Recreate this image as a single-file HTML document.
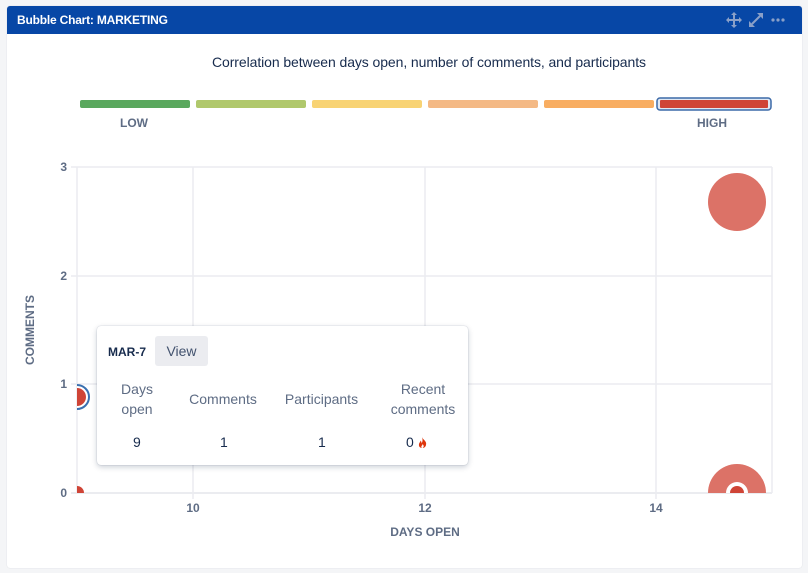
<!DOCTYPE html>
<html><head><meta charset="utf-8"><style>
body{margin:0;background:#f4f5f7;font-family:"Liberation Sans",Arial,sans-serif;width:808px;height:573px;overflow:hidden;position:relative}
.card{position:absolute;left:7px;top:6px;width:795px;height:562px;background:#fff;border-radius:3px;box-shadow:0 0 1px #c8ccd4}
.hdr{height:28px;background:#0747a6;color:#fff;font-weight:bold;font-size:12px;line-height:28px;padding-left:10px;border-radius:3px 3px 0 0;letter-spacing:-0.2px}
.tip{position:absolute;left:97px;top:326px;width:371px;height:139px;background:#fff;border-radius:4px;box-shadow:0 2px 6px rgba(9,30,66,.22),0 0 1px rgba(9,30,66,.3);font-size:14px;color:#5e6c84}
.tip .c{position:absolute;text-align:center;line-height:20px}
.tip .v{position:absolute;color:#172b4d;top:108px;line-height:16px}
</style></head><body>
<div class="card"><div class="hdr">Bubble Chart: MARKETING</div></div>
<svg width="808" height="573" style="position:absolute;left:0;top:0" font-family="Liberation Sans,Arial,sans-serif">
<g fill="#8aa0c8"><path d="M734 14v12M728 20h12" stroke="#8aa0c8" stroke-width="2"/><path d="M734 12l-3 3h6zM734 28l-3-3h6zM726 20l3-3v6zM742 20l-3-3v6z"/>
<path d="M752 24l8-8" stroke="#8aa0c8" stroke-width="2"/><path d="M757 13h6v6zM749 27v-6l6 6z"/>
<circle cx="773" cy="20" r="1.6"/><circle cx="778" cy="20" r="1.6"/><circle cx="783" cy="20" r="1.6"/></g>
<text x="429" y="67" font-size="14" fill="#172b4d" text-anchor="middle" textLength="434">Correlation between days open, number of comments, and participants</text>
<g>
<rect x="80" y="100" width="110" height="8" rx="2" fill="#5aa85e"/>
<rect x="196" y="100" width="110" height="8" rx="2" fill="#b0c86c"/>
<rect x="312" y="100" width="110" height="8" rx="2" fill="#f8d374"/>
<rect x="428" y="100" width="110" height="8" rx="2" fill="#f4b985"/>
<rect x="544" y="100" width="110" height="8" rx="2" fill="#f8ad61"/>
<rect x="657" y="98" width="114" height="12" rx="3" fill="#dfe7f3" stroke="#3c6aa8" stroke-width="1.5"/>
<rect x="660" y="100" width="108" height="8" rx="1" fill="#cf4436"/>
</g>
<text x="134" y="127" font-size="12" font-weight="bold" fill="#5e6c84" text-anchor="middle">LOW</text>
<text x="712" y="127" font-size="12" font-weight="bold" fill="#5e6c84" text-anchor="middle">HIGH</text>
<g stroke="#ebecf0" stroke-width="1.5">
<path d="M77 167H772M77 276H772M77 384H772M71 167H77M71 276H77M71 384H77M71 493H77"/>
<path d="M193 167V499M425 167V499M656 167V499M772 167V493"/>
<path d="M77 167V493" />
<path d="M71 493H772" stroke-width="2"/>
</g>
<g font-size="12" font-weight="bold" fill="#5e6c84">
<text x="67" y="171" text-anchor="end">3</text><text x="67" y="280" text-anchor="end">2</text>
<text x="67" y="388" text-anchor="end">1</text><text x="67" y="497" text-anchor="end">0</text>
<text x="193" y="512" text-anchor="middle">10</text><text x="425" y="512" text-anchor="middle">12</text><text x="656" y="512" text-anchor="middle">14</text>
<text x="425" y="536" text-anchor="middle">DAYS OPEN</text>
<text transform="translate(34,330) rotate(-90)" text-anchor="middle">COMMENTS</text>
</g>
<defs><clipPath id="cp"><rect x="77" y="150" width="720" height="343"/></clipPath></defs>
<g clip-path="url(#cp)">
<circle cx="737" cy="202" r="29" fill="#dc7267"/>
<circle cx="737" cy="493" r="29" fill="#dc7267"/>
<circle cx="737" cy="493" r="11" fill="#fff"/>
<circle cx="737" cy="493" r="7" fill="#cf4436"/>
<circle cx="77" cy="397" r="12" fill="#fff" stroke="#3a70b0" stroke-width="2"/>
<circle cx="77" cy="397" r="9" fill="#cf4436"/>
<circle cx="77" cy="493" r="7" fill="#cf4436"/>
</g>
</svg>
<div class="tip">
<div style="position:absolute;left:11px;top:19px;font-size:12px;font-weight:bold;color:#172b4d">MAR-7</div>
<div style="position:absolute;left:58px;top:10px;width:53px;height:30px;background:#ebecf0;border-radius:3px;color:#42526e;text-align:center;line-height:30px">View</div>
<div class="c" style="left:15px;top:53px;width:50px">Days<br>open</div>
<div class="c" style="left:86px;top:63px;width:80px">Comments</div>
<div class="c" style="left:182px;top:63px;width:85px">Participants</div>
<div class="c" style="left:286px;top:53px;width:80px">Recent<br>comments</div>
<div class="v" style="left:36px">9</div>
<div class="v" style="left:123px">1</div>
<div class="v" style="left:221px">1</div>
<div class="v" style="left:309px">0 <svg width="9" height="11" viewBox="0 0 9 11" style="vertical-align:-1px"><path d="M4 0C5 3 9 4 8 8 7.5 10 6 11 4.5 11 2 11 0.5 9.5 1 7 1.3 5.5 2.5 5 2.5 3.5 3.5 4.5 3.5 5.5 3.5 6.5 4.5 5 5 3 4 0Z" fill="#de350b"/><path d="M4.5 11C3.5 11 3 10 3.5 9 4 8.5 4.5 8 4.5 7 5.5 8 6 9 5.5 10 5.2 10.6 4.9 11 4.5 11Z" fill="#fff"/></svg></div>
</div>
</body></html>
